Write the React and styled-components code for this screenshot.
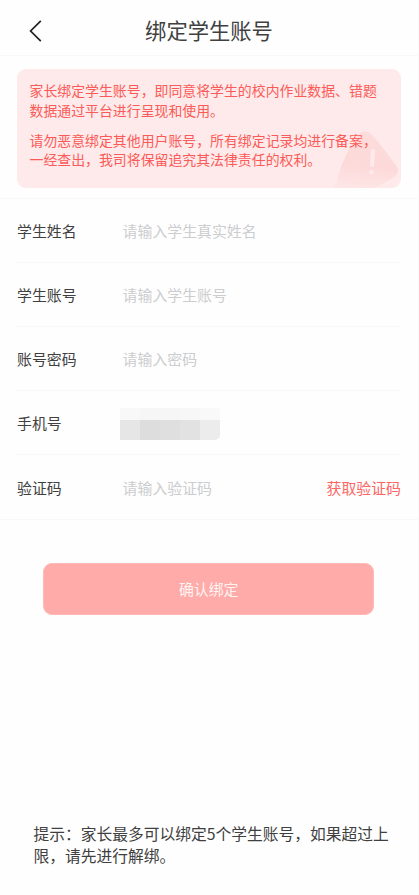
import React, { useState } from 'react';
import styled, { createGlobalStyle } from 'styled-components';

const GlobalStyle = createGlobalStyle`
  *{
    box-sizing: border-box;
  }
  body{
    margin: 0;
    background: #fefefe;
    font-family: 'Noto Sans CJK SC', sans-serif;
    color: #404040;
  }
`

const fields = [
  { name: 'name', label: '学生姓名', placeholder: '请输入学生真实姓名' },
  { name: 'account', label: '学生账号', placeholder: '请输入学生账号' },
  { name: 'password', label: '账号密码', placeholder: '请输入密码', type: 'password' },
  { name: 'phone', label: '手机号', masked: true },
  { name: 'code', label: '验证码', placeholder: '请输入验证码', action: '获取验证码' },
];

const App = () => {

const [values, setValues] = useState({});

const handleChange = (e) => {
  setValues({ ...values, [e.target.name]: e.target.value })
}

  return (
    <Page>
      <GlobalStyle />
      <Header>
        <BackButton aria-label="返回">
          <svg width="13" height="22" viewBox="0 0 13 22" fill="none" stroke="#222" strokeWidth="1.7">
            <path d="M11.8 0.8 L1.6 11 L11.8 21.2" />
          </svg>
        </BackButton>
        <Title>绑定学生账号</Title>
      </Header>
      <NoticeArea>
        <Notice>
          <WarningIcon width="68" height="58" viewBox="0 0 68 58">
            <defs>
              <linearGradient id="warn" x1="0.5" y1="0" x2="0.4" y2="1">
                <stop offset="0" stopColor="#fddcdc" />
                <stop offset="0.6" stopColor="#fdd9d9" />
                <stop offset="1" stopColor="#fee5e5" />
              </linearGradient>
            </defs>
            <path d="M0 58 L2 52 Q5 48 9 50 L14 58 Z" fill="#fee6e6" />
            <path d="M24 6 Q31 -3 39 5 Q46 12 64 37 Q67 43 61 47 Q52 53 42 58 H9 Q3 53 5 46 Q11 26 24 6 Z" fill="url(#warn)" />
            <path d="M40 21 L39 35" stroke="#feeaea" strokeWidth="4" strokeLinecap="round" />
            <circle cx="38.5" cy="42" r="2.3" fill="#feeaea" />
          </WarningIcon>
          <p>家长绑定学生账号，即同意将学生的校内作业数据、错题数据通过平台进行呈现和使用。</p>
          <p>请勿恶意绑定其他用户账号，所有绑定记录均进行备案，一经查出，我司将保留追究其法律责任的权利。</p>
        </Notice>
      </NoticeArea>
      <Form>
        {fields.map((field) => (
          <Row key={field.name}>
            <label htmlFor={field.name}>{field.label}</label>
            {field.masked ? (
              <Mask>
                <Block $color="#f8f8f8" /><Block $color="#f6f6f6" /><Block $color="#f6f6f6" /><Block $color="#f7f7f7" /><Block $color="#f9f9f9" />
                <Block $color="#e6e6e6" /><Block $color="#dddddd" /><Block $color="#dfdfdf" /><Block $color="#e2e2e2" /><Block $color="#ececec" />
              </Mask>
            ) : (
              <Input
                id={field.name}
                name={field.name}
                type={field.type || 'text'}
                placeholder={field.placeholder}
                value={values[field.name] || ''}
                onChange={handleChange}
              />
            )}
            {field.action && <CodeButton>{field.action}</CodeButton>}
          </Row>
        ))}
      </Form>
      <SubmitButton>确认绑定</SubmitButton>
      <Tip>提示：家长最多可以绑定5个学生账号，如果超过上限，请先进行解绑。</Tip>
    </Page>
  )
}

const Page = styled.div`
  display: flex;
  flex-direction: column;
  height: 895px;
  border-right: 1px solid #fafafa;
`
const Header = styled.header`
  display: grid;
  grid-template-columns: 60px 1fr 60px;
  align-items: center;
  height: 56px;
  padding-top: 5px;
  border-bottom: 1px solid #f8f8f8;
`
const BackButton = styled.button`
  display: flex;
  padding: 1px 0 0 29px;
  border: none;
  background: none;
  cursor: pointer;
`
const Title = styled.h1`
  margin: 0;
  font-size: 21.3px;
  font-weight: 400;
  line-height: 30px;
  text-align: center;
`
const NoticeArea = styled.div`
  height: 142.6px;
  padding: 13px 17px 0;
  border-bottom: 1px solid #f7f8f8;
`
const Notice = styled.div`
  position: relative;
  height: 118.6px;
  padding: 12px 12px 0 12.5px;
  border-radius: 9px;
  background: #feeaea;
  overflow: hidden;
  p{
    position: relative;
    margin: 0 0 10.5px;
    color: #fb5b58;
    font-size: 13.9px;
    line-height: 19.6px;
  }
`
const WarningIcon = styled.svg`
  position: absolute;
  right: 0;
  bottom: 0;
`
const Form = styled.form`
  border-bottom: 1px solid #f8f8f8;
`
const Row = styled.div`
  display: flex;
  align-items: center;
  height: 64.1px;
  margin: 0 17px;
  border-bottom: 1px solid #f8f8f8;
  font-size: 14.9px;
  &:last-child{
    border-bottom: none;
  }
  label{
    flex: 0 0 103px;
  }
`
const Input = styled.input`
  flex: 1;
  min-width: 0;
  padding: 0 0 0 2.6px;
  border: none;
  outline: none;
  background: none;
  color: inherit;
  font: inherit;
  &::placeholder{
    color: #cbcdce;
    opacity: 1;
  }
`
const CodeButton = styled.button`
  padding: 0;
  border: none;
  background: none;
  color: #fb6664;
  font: inherit;
  cursor: pointer;
`
const Mask = styled.div`
  display: grid;
  grid-template-columns: repeat(5, 20px);
  grid-template-rows: 12px 20px;
  margin-top: 3px;
  border-radius: 0 3px 5px 0;
  overflow: hidden;
`
const Block = styled.span`
  background: ${(props) => props.$color};
`
const SubmitButton = styled.button`
  flex-shrink: 0;
  height: 52px;
  margin: 43px 44px 0 43.4px;
  padding: 0 0 2px;
  border: 1px solid #ffb9b7;
  border-radius: 9px;
  background: #ffaba9;
  color: #fff4f3;
  font-family: inherit;
  font-size: 14.9px;
  cursor: pointer;
`
const Tip = styled.p`
  margin: auto 28px 29px 33.4px;
  font-size: 15.75px;
  line-height: 21.5px;
`

export default App
